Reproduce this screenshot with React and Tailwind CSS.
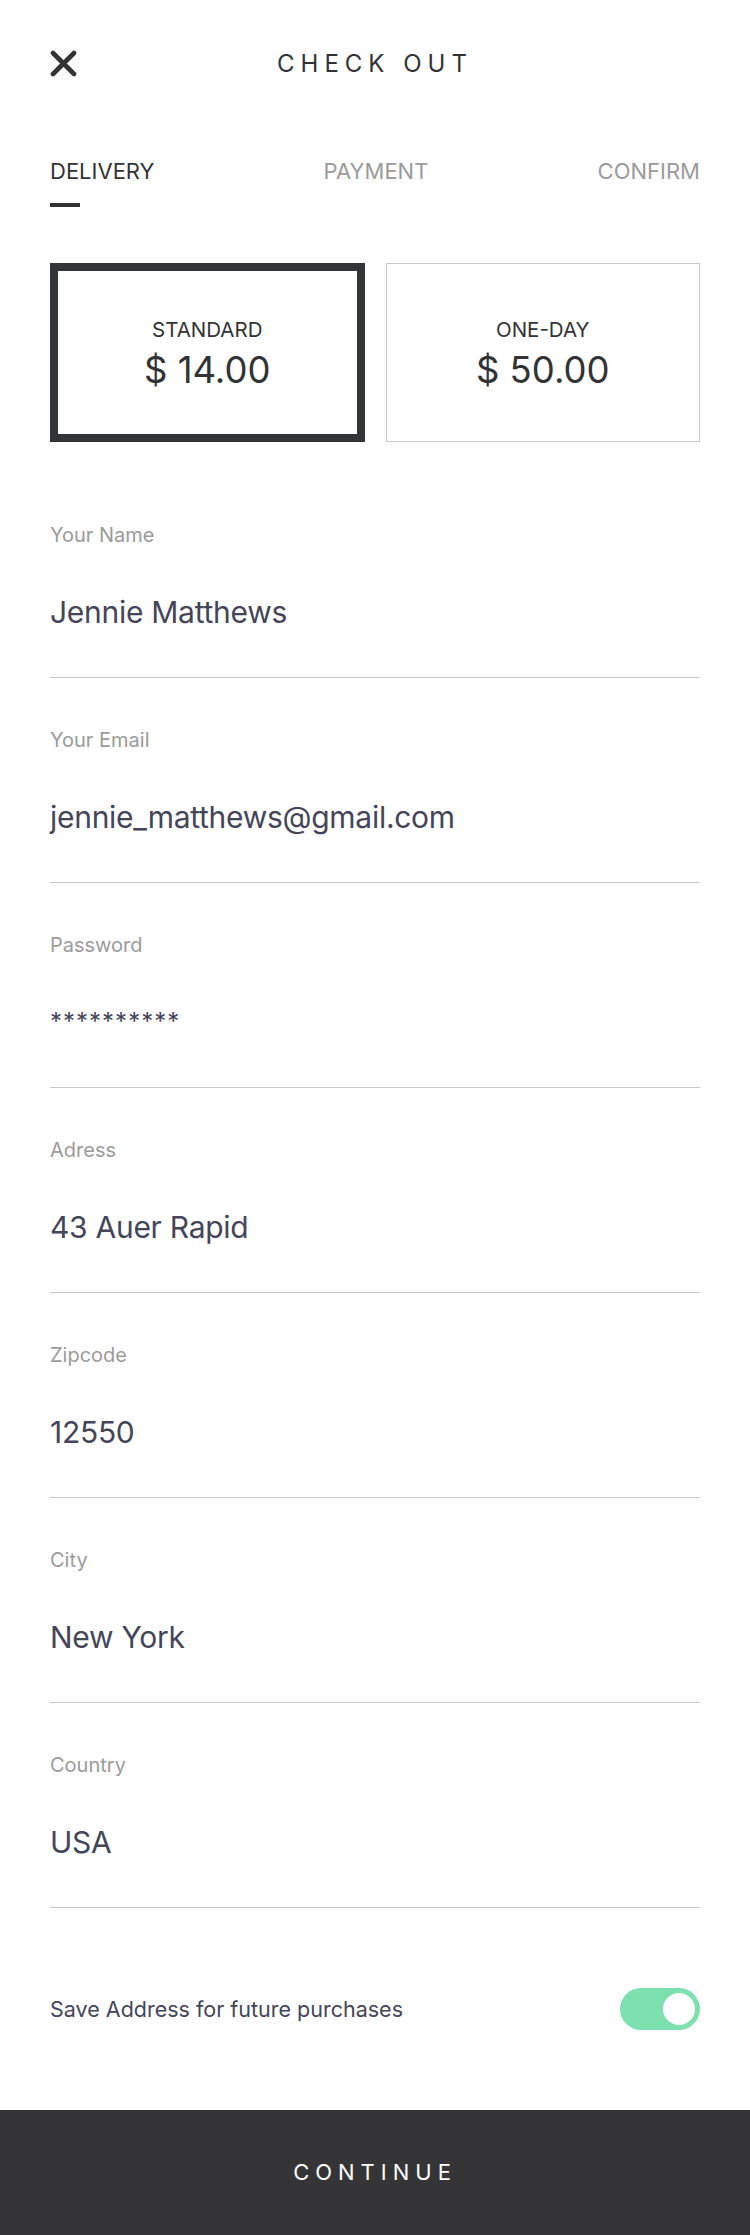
import React from "react";

const fields = [
  { label: "Your Name", value: "Jennie Matthews" },
  { label: "Your Email", value: "jennie_matthews@gmail.com" },
  { label: "Password", value: "**********", pw: true },
  { label: "Adress", value: "43 Auer Rapid" },
  { label: "Zipcode", value: "12550" },
  { label: "City", value: "New York" },
  { label: "Country", value: "USA" },
];

export default function App() {
  return (
    <div className="w-[750px] bg-white flex flex-col" style={{ fontFamily: "Inter, 'Noto Sans', sans-serif" }}>
      <div className="px-[50px] pt-[50px] flex flex-col">
        {/* header */}
        <div className="grid grid-cols-[1fr_auto_1fr] items-center h-[27px]">
          <svg width="27" height="27" viewBox="0 0 27 27" className="block">
            <path d="M3 3 L24 24 M24 3 L3 24" stroke="#333335" strokeWidth="4.6" strokeLinecap="round" fill="none" />
          </svg>
          <div className="text-[24px] leading-[27px] tracking-[6px] text-[#333335]">CHECK OUT</div>
          <div />
        </div>

        {/* tabs */}
        <div className="mt-[80px] flex justify-between text-[22px] leading-[28px]">
          <div className="text-[#333335]">DELIVERY</div>
          <div className="text-[#9b9b9b]">PAYMENT</div>
          <div className="text-[#9b9b9b]">CONFIRM</div>
        </div>
        <div className="mt-[18px] w-[30px] h-[4px] bg-[#333335]" />

        {/* shipping options */}
        <div className="mt-[56px] grid grid-cols-2 gap-[21px] h-[179px]">
          <div className="border-[8px] border-[#333436] flex flex-col items-center justify-center pt-[5px] text-[#333335]">
            <div className="text-[20.5px] leading-[24px]">STANDARD</div>
            <div className="mt-[6px] text-[36.5px] leading-[44px]">$ 14.00</div>
          </div>
          <div className="border border-[#c9c9c9] flex flex-col items-center justify-center pt-[5px] text-[#333335]">
            <div className="text-[20.5px] leading-[24px]">ONE-DAY</div>
            <div className="mt-[6px] text-[36.5px] leading-[44px]">$ 50.00</div>
          </div>
        </div>

        {/* fields */}
        <div className="mt-[31px] flex flex-col">
          {fields.map((f) => (
            <div key={f.label} className="pt-[50px] pb-[47px] border-b border-[#c9c9c9] flex flex-col">
              <div className="text-[20px] leading-[24px] text-[#9b9b9b]">{f.label}</div>
              <div className="mt-[47px] text-[30px] leading-[36px] tracking-[-0.28px] text-[#45455a]">
                {f.pw ? (
                  <span className="text-[24px] tracking-[1px] align-top leading-[26px] relative top-[5px]">{f.value}</span>
                ) : (
                  f.value
                )}
              </div>
            </div>
          ))}
        </div>

        {/* save toggle */}
        <div className="mt-[79.5px] mb-[80px] h-[42px] flex items-center justify-between">
          <div className="text-[21.5px] leading-[26px] text-[#45455a]">Save Address for future purchases</div>
          <div className="w-[80px] h-[42px] rounded-full bg-[#7ce0af] flex items-center justify-end pr-[5px]">
            <div className="w-[32px] h-[32px] rounded-full bg-white" />
          </div>
        </div>
      </div>

      {/* continue */}
      <div className="h-[125px] bg-[#353537] flex items-center justify-center">
        <div className="text-[22px] leading-[28px] tracking-[6px] text-white">CONTINUE</div>
      </div>
    </div>
  );
}
